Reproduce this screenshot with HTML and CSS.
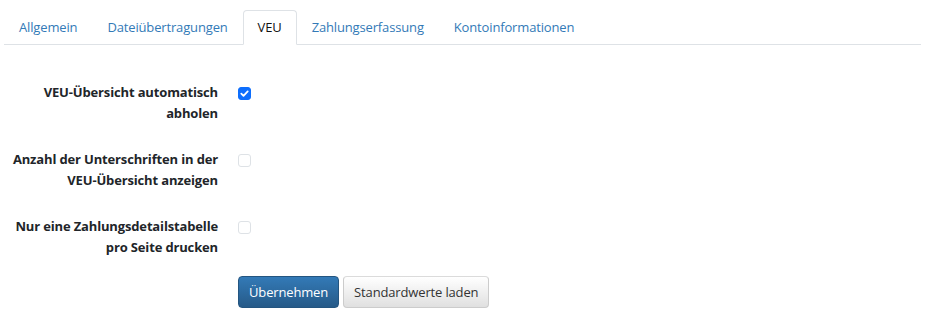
FILE: index.html
```html
<!DOCTYPE html>
<html lang="de">
<head>
<meta charset="utf-8">
<title>Einstellungen</title>
<link rel="stylesheet" href="styles.css">
</head>
<body>
<div class="page">
  <ul class="tabs">
    <li><a class="tab" href="#">Allgemein</a></li>
    <li><a class="tab" href="#">Dateiübertragungen</a></li>
    <li><a class="tab active" href="#">VEU</a></li>
    <li><a class="tab" href="#">Zahlungserfassung</a></li>
    <li><a class="tab" href="#">Kontoinformationen</a></li>
  </ul>
  <form class="form">
    <div class="rows">
      <div class="row">
        <label class="label">VEU-Übersicht automatisch<br>abholen</label>
        <div class="control"><span class="check checked"><svg viewBox="0 0 13 13" width="13" height="13"><path d="M3.3 6.7 L5.5 8.8 L9.7 4.4" fill="none" stroke="#fff" stroke-width="1.8" stroke-linecap="round" stroke-linejoin="round"/></svg></span></div>
      </div>
      <div class="row">
        <label class="label">Anzahl der Unterschriften in der<br>VEU-Übersicht anzeigen</label>
        <div class="control"><span class="check"></span></div>
      </div>
      <div class="row">
        <label class="label">Nur eine Zahlungsdetailstabelle<br>pro Seite drucken</label>
        <div class="control"><span class="check"></span></div>
      </div>
    </div>
    <div class="actions">
      <button type="button" class="btn btn-primary">Übernehmen</button>
      <button type="button" class="btn btn-default">Standardwerte laden</button>
    </div>
  </form>
</div>
</body>
</html>
```
FILE: styles.css
```css
html, body {
  margin: 0;
  padding: 0;
  background: #fff;
}
body {
  font-family: "Open Sans", "Noto Sans", "Liberation Sans", sans-serif;
  font-size: 13px;
  letter-spacing: -0.15px;
  color: #212529;
}
.page {
  padding: 10px 7px 0 4px;
}
.tabs {
  display: flex;
  list-style: none;
  margin: 0;
  padding: 0;
  border-bottom: 1px solid #dee2e6;
}
.tabs li {
  margin-bottom: -1px;
}
.tab {
  display: block;
  padding: 8px 14px;
  line-height: 17px;
  border: 1px solid transparent;
  border-radius: 4px 4px 0 0;
  color: #337ab7;
  text-decoration: none;
}
.tab.active {
  color: #111;
  border-color: #dee2e6 #dee2e6 #fff;
  background: #fff;
}
.form {
  margin-top: 37px;
}
.rows {
  display: flex;
  flex-direction: column;
  gap: 25px;
}
.row {
  display: grid;
  grid-template-columns: 214px 1fr;
  column-gap: 20px;
}
.label {
  text-align: right;
  font-weight: 700;
  line-height: 21px;
  color: #212529;
}
.control {
  padding-top: 5px;
}
.check {
  display: block;
  width: 13px;
  height: 13px;
  box-sizing: border-box;
  border: 1px solid #dee2e6;
  border-radius: 3px;
  background: #fff;
}
.check.checked {
  background: #0d6efd;
  border-color: #0d6efd;
  position: relative;
}
.check.checked svg {
  position: absolute;
  left: -1px;
  top: -1px;
}
.actions {
  margin-top: 18px;
  padding-left: 234px;
  display: flex;
  gap: 4px;
}
.btn {
  font-family: inherit;
  font-size: 13px;
  letter-spacing: -0.15px;
  line-height: 18px;
  padding: 6px 10px;
  border-radius: 4px;
  border: 1px solid;
  cursor: pointer;
}
.btn-primary {
  color: #fff;
  background: linear-gradient(#337ab7, #265a88);
  border-color: #245580;
}
.btn-default {
  color: #333;
  background: linear-gradient(#fff, #e0e0e0);
  border-color: #dbdbdb #ccc #ccc;
}
```
